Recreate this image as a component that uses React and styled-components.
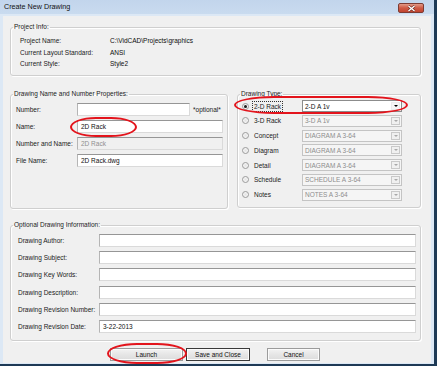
import React from "react";
import styled, { createGlobalStyle } from "styled-components";

const GlobalStyle = createGlobalStyle`
  html, body {
    margin: 0;
    padding: 0;
    background: #ffffff;
  }
  body {
    font-family: "Liberation Sans", Arial, sans-serif;
  }
`;

const Window = styled.div`
  position: relative;
  width: 437px;
  height: 366px;
  box-sizing: border-box;
  padding: 0 3px 2px 0;
  background: #1e3a56;
  font-family: "Liberation Sans", Arial, sans-serif;
  font-size: 6.5px;
  color: #111;
  overflow: hidden;
`;

const Frame = styled.div`
  height: 100%;
  display: flex;
  flex-direction: column;
  background: #dce8f5;
`;

const TitleBar = styled.div`
  height: 14px;
  flex: none;
  display: flex;
  align-items: flex-start;
  justify-content: space-between;
  padding: 0 10px 0 4px;
  background: linear-gradient(#c2d5ec, #c9dbef);
`;

const Title = styled.span`
  font-size: 7.2px;
  line-height: 14px;
  color: #111;
`;

const CloseButton = styled.div`
  margin-top: 3px;
  width: 26px;
  height: 10px;
  box-sizing: border-box;
  display: flex;
  align-items: center;
  justify-content: center;
  border: 1px solid #7d3b33;
  border-radius: 2px;
  background: linear-gradient(#e29a88, #cf5a45 50%, #c14430);
`;

const Client = styled.div`
  flex: 1;
  margin: 2px 3px 1px 3px;
  padding: 7px 10px 0 7px;
  display: flex;
  flex-direction: column;
  background: #f0f0f0;
`;

const Group = styled.fieldset`
  margin: ${(p) => p.$top || 0}px 0 0 0;
  padding: 0;
  min-width: 0;
  width: ${(p) => (p.$w ? `${p.$w}px` : "auto")};
  height: ${(p) => p.$h}px;
  box-sizing: border-box;
  border: 1px solid #cfcfcf;
  border-radius: 3px;
  box-shadow: inset 1px 1px 0 #ffffff, 1px 1px 0 #ffffff;
`;

const Legend = styled.legend`
  margin-left: 2px;
  padding: 0 1px;
  font-size: 6.5px;
  line-height: 8px;
  color: #1a1a1a;
`;

const InfoGrid = styled.div`
  padding: 4px 0 0 9px;
  display: grid;
  grid-template-columns: 90px auto;
  grid-auto-rows: 11.5px;
  align-items: center;
`;

const Text = styled.span`
  color: ${(p) => p.$color || "#1a1a1a"};
  white-space: nowrap;
`;

const Rows = styled.div`
  padding: ${(p) => p.$pad};
  display: flex;
  flex-direction: column;
  gap: ${(p) => p.$gap}px;
`;

const FieldRow = styled.div`
  height: ${(p) => p.$h || 13}px;
  display: grid;
  grid-template-columns: ${(p) => p.$cols};
  align-items: center;
`;

const Input = styled.div`
  height: 13px;
  box-sizing: border-box;
  padding-left: 3px;
  display: flex;
  align-items: center;
  border: 1px solid #dadada;
  border-top-color: #969696;
  border-left-color: #b5b5b5;
  background: ${(p) => (p.$disabled ? "#f0f0f0" : "#ffffff")};
  color: ${(p) => (p.$disabled ? "#8f8f8f" : "#111")};
  white-space: nowrap;
`;

const Optional = styled.span`
  margin-left: 3px;
  color: #1a1a1a;
  white-space: nowrap;
`;

const MiddleRow = styled.div`
  margin-top: 14px;
  display: flex;
  gap: 9px;
  align-items: flex-start;
`;

const RadioLabel = styled.div`
  display: flex;
  align-items: center;
`;

const Radio = styled.span`
  width: 7px;
  height: 7px;
  margin-left: -1px;
  box-sizing: border-box;
  border-radius: 50%;
  border: 1px solid #9a9a9a;
  background: radial-gradient(circle, #e4e4e4, #fdfdfd);
  display: flex;
  align-items: center;
  justify-content: center;
  &::after {
    content: "";
    width: 3px;
    height: 3px;
    border-radius: 50%;
    background: ${(p) => (p.$checked ? "#1b1b1b" : "transparent")};
  }
`;

const RadioText = styled.span`
  margin-left: ${(p) => (p.$focus ? 4 : 5)}px;
  padding: ${(p) => (p.$focus ? "1px 1px" : 0)};
  outline: ${(p) => (p.$focus ? "1px dotted #333" : "none")};
  color: #1a1a1a;
  white-space: nowrap;
`;

const Select = styled.div`
  height: 12px;
  box-sizing: border-box;
  padding-left: 2px;
  display: flex;
  align-items: center;
  justify-content: space-between;
  border: 1px solid ${(p) => (p.$disabled ? "#c4c4c4" : "#8c8c8c")};
  background: ${(p) => (p.$disabled ? "#f5f5f5" : "#ffffff")};
  color: ${(p) => (p.$disabled ? "#8d8d8d" : "#111")};
  white-space: nowrap;
`;

const Arrow = styled.span`
  width: 9px;
  height: 8px;
  margin-right: 1px;
  box-sizing: border-box;
  display: flex;
  align-items: center;
  justify-content: center;
  border: 1px solid ${(p) => (p.$disabled ? "#c9c9c9" : "#ececec")};
  background: ${(p) => (p.$disabled ? "#f0f0f0" : "#f6f6f6")};
  &::after {
    content: "";
    border-left: 2px solid transparent;
    border-right: 2px solid transparent;
    border-top: 2px solid ${(p) => (p.$disabled ? "#a8a8a8" : "#000")};
  }
`;

const ButtonRow = styled.div`
  margin: 7px 0 0 100px;
  display: flex;
`;

const Button = styled.div`
  width: ${(p) => p.$w}px;
  height: 13px;
  margin-left: ${(p) => p.$ml || 0}px;
  box-sizing: border-box;
  display: flex;
  align-items: center;
  justify-content: center;
  border: 1px solid ${(p) => (p.$default ? "#3a3a3a" : "#9c9c9c")};
  box-shadow: inset 0 0 0 1px #fbfbfb;
  background: linear-gradient(#f3f3f3, #e6e6e6 50%, #dcdcdc);
  color: #111;
  white-space: nowrap;
`;

const Mark = styled.div`
  position: absolute;
  box-sizing: border-box;
  border: 2px solid #e3141c;
  pointer-events: none;
`;

const projectInfo = [
  ["Project Name:", "C:\\VidCAD\\Projects\\graphics"],
  ["Current Layout Standard:", "ANSI"],
  ["Current Style:", "Style2"],
];

const drawingTypes = [
  { label: "2-D Rack", value: "2-D A 1v", active: true },
  { label: "3-D Rack", value: "3-D A 1v" },
  { label: "Concept", value: "DIAGRAM A 3-64" },
  { label: "Diagram", value: "DIAGRAM A 3-64" },
  { label: "Detail", value: "DIAGRAM A 3-64" },
  { label: "Schedule", value: "SCHEDULE A 3-64" },
  { label: "Notes", value: "NOTES A 3-64" },
];

const optionalFields = [
  ["Drawing Author:", ""],
  ["Drawing Subject:", ""],
  ["Drawing Key Words:", ""],
  ["Drawing Description:", ""],
  ["Drawing Revision Number:", ""],
  ["Drawing Revision Date:", "3-22-2013"],
];

function CloseIcon() {
  return (
    <svg width="9" height="7" viewBox="0 0 9 7">
      <path d="M1.5 1 L7.5 6 M7.5 1 L1.5 6" stroke="#6b2a22" strokeWidth="2.6" />
      <path d="M1.5 1 L7.5 6 M7.5 1 L1.5 6" stroke="#ffffff" strokeWidth="1.4" />
    </svg>
  );
}

export default function App() {
  return (
    <Window>
      <GlobalStyle />
      <Frame>
        <TitleBar>
          <Title>Create New Drawing</Title>
          <CloseButton>
            <CloseIcon />
          </CloseButton>
        </TitleBar>
        <Client>
          <Group $h={53}>
            <Legend>Project Info:</Legend>
            <InfoGrid>
              {projectInfo.map(([label, value]) => (
                <React.Fragment key={label}>
                  <Text>{label}</Text>
                  <Text $color="#0d0d0d">{value}</Text>
                </React.Fragment>
              ))}
            </InfoGrid>
          </Group>

          <MiddleRow>
            <Group $w={218} $h={119}>
              <Legend>Drawing Name and Number Properties:</Legend>
              <Rows $pad="5px 4px 0 5px" $gap={4}>
                <FieldRow $cols="61px 113px auto">
                  <Text>Number:</Text>
                  <Input />
                  <Optional>*optional*</Optional>
                </FieldRow>
                <FieldRow $cols="61px 1fr">
                  <Text>Name:</Text>
                  <Input>2D Rack</Input>
                </FieldRow>
                <FieldRow $cols="61px 1fr">
                  <Text>Number and Name:</Text>
                  <Input $disabled>2D Rack</Input>
                </FieldRow>
                <FieldRow $cols="61px 1fr">
                  <Text>File Name:</Text>
                  <Input>2D Rack.dwg</Input>
                </FieldRow>
              </Rows>
            </Group>

            <Group $w={184} $h={118}>
              <Legend>Drawing Type:</Legend>
              <Rows $pad="2px 19px 0 5px" $gap={2.8}>
                {drawingTypes.map((t) => (
                  <FieldRow key={t.label} $h={12} $cols="59px 100px">
                    <RadioLabel>
                      <Radio $checked={t.active} />
                      <RadioText $focus={t.active}>{t.label}</RadioText>
                    </RadioLabel>
                    <Select $disabled={!t.active}>
                      {t.value}
                      <Arrow $disabled={!t.active} />
                    </Select>
                  </FieldRow>
                ))}
              </Rows>
            </Group>
          </MiddleRow>

          <Group $top={12} $h={120}>
            <Legend>Optional Drawing Information:</Legend>
            <Rows $pad="5px 4px 0 7px" $gap={4.2}>
              {optionalFields.map(([label, value]) => (
                <FieldRow key={label} $cols="81px 1fr">
                  <Text>{label}</Text>
                  <Input>{value}</Input>
                </FieldRow>
              ))}
            </Rows>
          </Group>

          <ButtonRow>
            <Button $w={73}>Launch</Button>
            <Button $w={64} $ml={3} $default>
              Save and Close
            </Button>
            <Button $w={53} $ml={17}>
              Cancel
            </Button>
          </ButtonRow>
        </Client>
      </Frame>

      <Mark style={{ left: 70, top: 117, width: 67, height: 20, borderRadius: "26px / 10px" }} />
      <Mark style={{ left: 234, top: 96, width: 174, height: 18, borderRadius: "40px / 9px" }} />
      <Mark style={{ left: 107, top: 343, width: 80, height: 21, borderRadius: "30px / 10.5px" }} />
    </Window>
  );
}
